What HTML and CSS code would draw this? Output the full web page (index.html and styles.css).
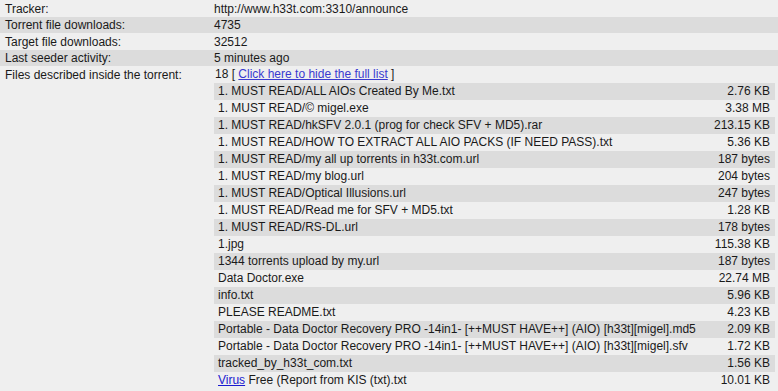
FILE: index.html
```html
<!DOCTYPE html>
<html>
<head>
<meta charset="utf-8">
<link rel="stylesheet" href="styles.css">
</head>
<body>
<table class="info">
  <tr class="r-light h17"><td class="lbl">Tracker:</td><td class="val">http://www.h33t.com:3310/announce</td></tr>
  <tr class="r-dark h16"><td class="lbl">Torrent file downloads:</td><td class="val">4735</td></tr>
  <tr class="r-light h17"><td class="lbl">Target file downloads:</td><td class="val">32512</td></tr>
  <tr class="r-dark h16"><td class="lbl">Last seeder activity:</td><td class="val">5 minutes ago</td></tr>
  <tr class="r-light">
    <td class="lbl top">Files described inside the torrent:</td>
    <td class="val top">
      <div class="count">18 [ <a href="#" class="link">Click here to hide the full list</a> ]</div>
      <table class="files">
        <tr class="f-dark"><td>1. MUST READ/ALL AIOs Created By Me.txt</td><td class="sz">2.76 KB</td></tr>
        <tr class="f-light"><td>1. MUST READ/© migel.exe</td><td class="sz">3.38 MB</td></tr>
        <tr class="f-dark"><td>1. MUST READ/hkSFV 2.0.1 (prog for check SFV + MD5).rar</td><td class="sz">213.15 KB</td></tr>
        <tr class="f-light"><td>1. MUST READ/HOW TO EXTRACT ALL AIO PACKS (IF NEED PASS).txt</td><td class="sz">5.36 KB</td></tr>
        <tr class="f-dark"><td>1. MUST READ/my all up torrents in h33t.com.url</td><td class="sz">187 bytes</td></tr>
        <tr class="f-light"><td>1. MUST READ/my blog.url</td><td class="sz">204 bytes</td></tr>
        <tr class="f-dark"><td>1. MUST READ/Optical Illusions.url</td><td class="sz">247 bytes</td></tr>
        <tr class="f-light"><td>1. MUST READ/Read me for SFV + MD5.txt</td><td class="sz">1.28 KB</td></tr>
        <tr class="f-dark"><td>1. MUST READ/RS-DL.url</td><td class="sz">178 bytes</td></tr>
        <tr class="f-light"><td>1.jpg</td><td class="sz">115.38 KB</td></tr>
        <tr class="f-dark"><td>1344 torrents upload by my.url</td><td class="sz">187 bytes</td></tr>
        <tr class="f-light"><td>Data Doctor.exe</td><td class="sz">22.74 MB</td></tr>
        <tr class="f-dark"><td>info.txt</td><td class="sz">5.96 KB</td></tr>
        <tr class="f-light"><td>PLEASE README.txt</td><td class="sz">4.23 KB</td></tr>
        <tr class="f-dark"><td>Portable - Data Doctor Recovery PRO -14in1- [++MUST HAVE++] (AIO) [h33t][migel].md5</td><td class="sz">2.09 KB</td></tr>
        <tr class="f-light"><td>Portable - Data Doctor Recovery PRO -14in1- [++MUST HAVE++] (AIO) [h33t][migel].sfv</td><td class="sz">1.72 KB</td></tr>
        <tr class="f-dark"><td>tracked_by_h33t_com.txt</td><td class="sz">1.56 KB</td></tr>
        <tr class="f-light"><td><a href="#" class="vlink">Virus</a> Free (Report from KIS (txt).txt</td><td class="sz">10.01 KB</td></tr>
      </table>
    </td>
  </tr>
</table>
</body>
</html>
```

FILE: styles.css
```css
html, body {
  margin: 0;
  padding: 0;
  background: #efefef;
}
body {
  font-family: "Liberation Sans", Arial, sans-serif;
  font-size: 12px;
  color: #1a1a1a;
}
.info {
  width: 100%;
  border-collapse: collapse;
  border-spacing: 0;
}
.info td {
  padding: 0;
  vertical-align: middle;
  line-height: 14px;
}
.h17 { height: 17px; }
.h16 { height: 16px; }
.r-light { background: #efefef; }
.r-dark { background: #dcdcdc; }
.lbl {
  width: 208px;
  padding-left: 5px !important;
  white-space: nowrap;
}
.val {
  padding-left: 1px !important;
}
.top {
  vertical-align: top !important;
}
.lbl.top {
  padding-top: 2px !important;
}
.count {
  height: 17px;
  line-height: 17px;
  padding-left: 1px;
}
.link {
  color: #3a3ad0;
  text-decoration: underline;
}
.files {
  width: 561px;
  border-collapse: collapse;
  border-spacing: 0;
}
.files td {
  height: 17px;
  padding: 0 4px;
  line-height: 17px;
  white-space: nowrap;
}
.files .sz {
  text-align: right;
  width: 72px;
  padding-right: 5px;
}
.f-dark { background: #dcdcdc; }
.f-light { background: #efefef; }
.vlink {
  color: #1a1ad0;
  text-decoration: underline;
}
```
